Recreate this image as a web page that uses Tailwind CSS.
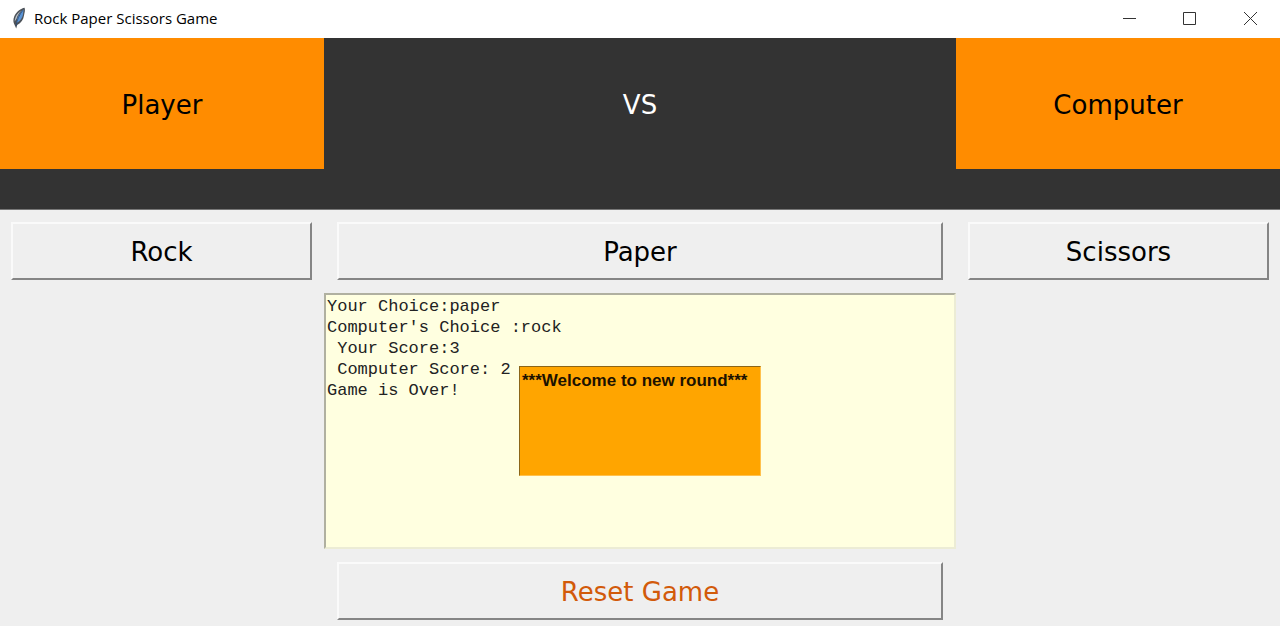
<!DOCTYPE html>
<html lang="en">
<head>
<meta charset="utf-8">
<meta name="viewport" content="width=device-width, initial-scale=1">
<title>Rock Paper Scissors Game</title>
<script src="https://cdn.jsdelivr.net/npm/@tailwindcss/browser@4"></script>
</head>
<body class="min-h-screen bg-[#efefef] font-['DejaVu_Sans',sans-serif] text-[26px] leading-8 text-black">
<header class="flex h-[38px] items-center justify-between bg-white pb-0.5">
  <div class="flex items-center gap-2 pl-3">
    <svg class="h-[22px] w-[14px]" viewBox="0 0 14 22" aria-hidden="true">
      <path d="M12.600 0.800C9 1.200 4.200 5 2.200 9.600C1 12.600 1.200 15.600 2.400 17.600L4.200 21.400L5.200 18C9.200 15.800 11.400 12.400 12 8.400C12.600 5.600 13.400 3.200 12.600 0.800Z" fill="#4d5258"/>
      <path d="M11.600 2.600C8.800 4.600 6.400 8 5.200 12L4.600 16C8.400 13.800 10.400 10.800 11 7.400Z" fill="#5b94d6"/>
      <path d="M9.600 3.200C5.600 5.800 2.800 9.800 2.700 14.600L4.600 11.600C5.400 8.400 7.200 5.600 9.600 3.200Z" fill="#b9c2ca"/>
      <path d="M10.800 3.400C7.200 8 5.200 12.200 4 19" fill="none" stroke="#2a4a75" stroke-width="0.800"/>
    </svg>
    <h1 class="font-['Open_Sans',sans-serif] text-[15px] leading-5">Rock Paper Scissors Game</h1>
  </div>
  <div class="flex h-full pr-px">
    <button type="button" aria-label="Minimize" class="grid w-[60px] place-items-center">
      <svg class="size-4" viewBox="0 0 16 16" fill="none" stroke="#333"><path d="M2 8.500h13"/></svg>
    </button>
    <button type="button" aria-label="Maximize" class="grid w-[60px] place-items-center">
      <svg class="size-4" viewBox="0 0 16 16" fill="none" stroke="#333"><path d="M2.500 2.500h12v12h-12z"/></svg>
    </button>
    <button type="button" aria-label="Close" class="grid w-[60px] place-items-center">
      <svg class="size-4" viewBox="0 0 16 16" fill="none" stroke="#333"><path d="M3 2l13 13M16 2l-13 13"/></svg>
    </button>
  </div>
</header>
<main>
  <section class="grid grid-cols-[324fr_632fr_324fr] border-b border-[#777] bg-[#333] pb-10 text-center">
    <h2 class="bg-[#ff8c00] pt-[51px] pb-12">Player</h2>
    <p class="pt-[51px] pb-12 text-white">VS</p>
    <h2 class="bg-[#ff8c00] pt-[51px] pb-12">Computer</h2>
  </section>
  <section class="grid grid-cols-[324fr_632fr_324fr] gap-y-[13px] pt-3">
    <div class="pr-3 pl-[11px]"><button type="button" class="h-[58px] w-full border-2 border-t-[#fafafa] border-r-[#858585] border-b-[#858585] border-l-[#fafafa] pt-0.5">Rock</button></div>
    <div class="px-[13px]"><button type="button" class="h-[58px] w-full border-2 border-t-[#fafafa] border-r-[#858585] border-b-[#858585] border-l-[#fafafa] pt-0.5">Paper</button></div>
    <div class="pr-[11px] pl-3"><button type="button" class="h-[58px] w-full border-2 border-t-[#fafafa] border-r-[#858585] border-b-[#858585] border-l-[#fafafa] pt-0.5">Scissors</button></div>
    <div class="relative col-start-2 grid">
      <textarea aria-label="Game result" spellcheck="false" class="h-64 w-full resize-none border-2 border-t-[#b0b0a0] border-r-[#ececd5] border-b-[#ececd5] border-l-[#b0b0a0] bg-[#ffffe0] px-px pt-px font-['Liberation_Mono',monospace] text-[17px] leading-[21px] text-[#222] outline-none">Your Choice:paper
Computer's Choice :rock
 Your Score:3
 Computer Score: 2
Game is Over!</textarea>
      <textarea aria-label="Round message" spellcheck="false" class="absolute top-[73px] left-1/2 h-[110px] w-[242px] -translate-x-1/2 resize-none border border-t-[#8b6518] border-r-[#ffc14d] border-b-[#ffc14d] border-l-[#8b6518] bg-[#ffa500] px-0.5 pt-[3px] font-['Liberation_Sans',sans-serif] text-[17px] leading-[21px] font-bold text-[#1c1200] outline-none">***Welcome to new round***</textarea>
    </div>
    <div class="col-start-2 px-[13px]"><button type="button" class="h-[58px] w-full border-2 border-t-[#fafafa] border-r-[#858585] border-b-[#858585] border-l-[#fafafa] pt-0.5 text-[#d25a0a]">Reset Game</button></div>
  </section>
</main>
</body>
</html>
